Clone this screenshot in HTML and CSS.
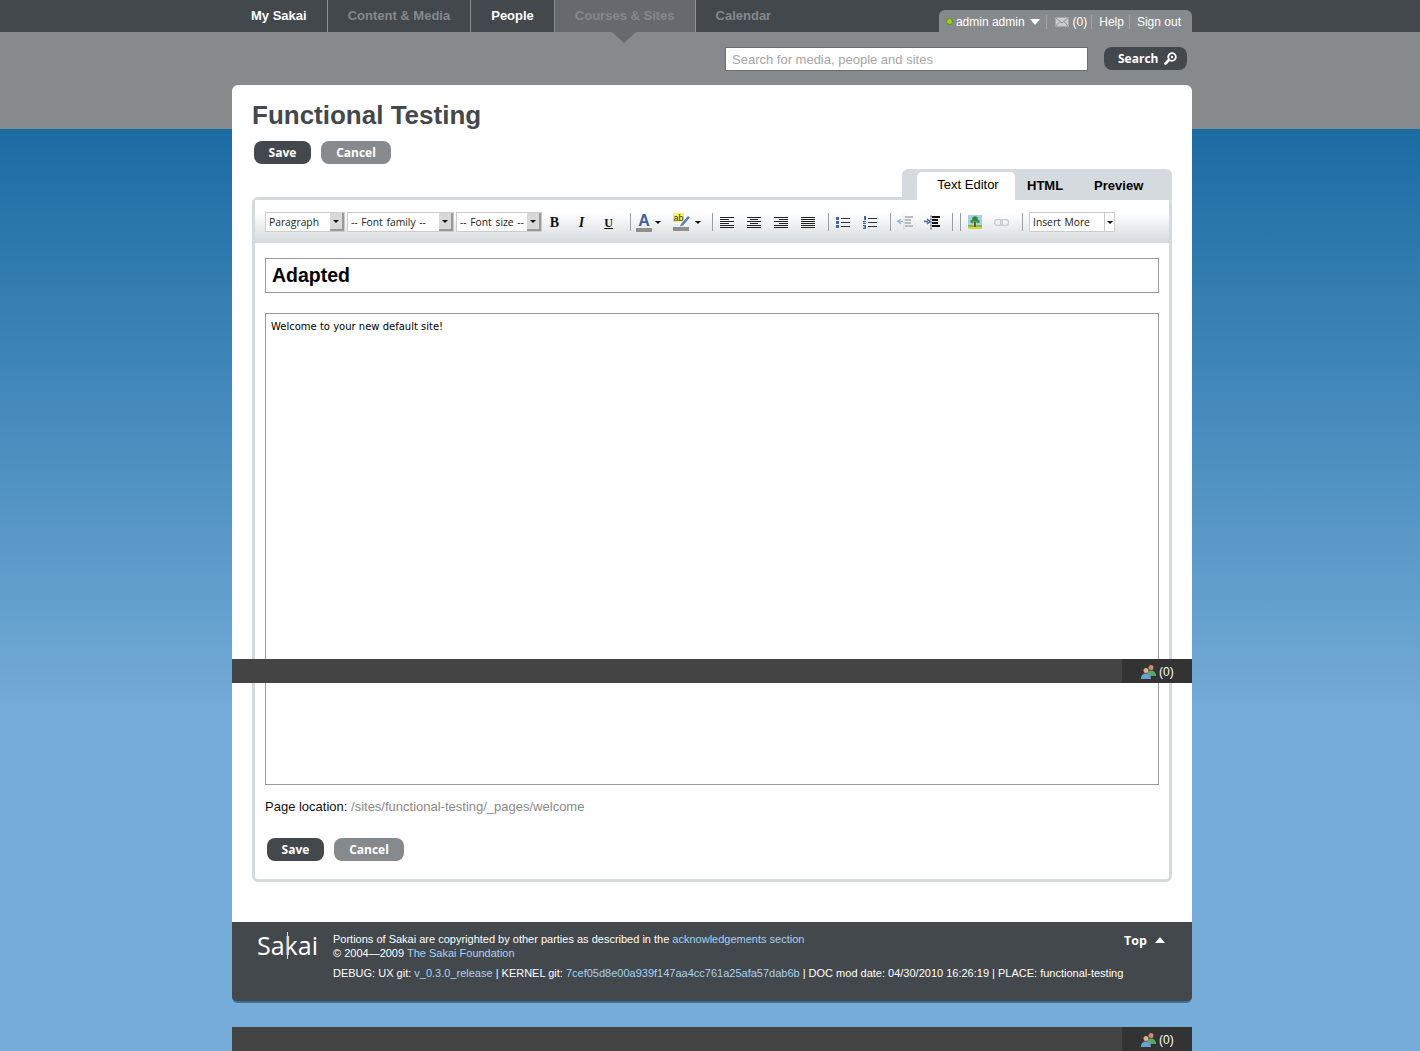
FILE: index.html
```html
<!DOCTYPE html>
<html lang="en">
<head>
    <meta charset="UTF-8">
    <meta name="viewport" content="width=device-width, initial-scale=1.0">
    <title>Functional Testing</title>
    <link rel="stylesheet" href="styles.css">
</head>
<body>
    <div class="page">
        <!-- Top navigation -->
        <div class="topnav">
            <a class="nav-item nav-on nav-first">My Sakai</a>
            <a class="nav-item">Content &amp; Media</a>
            <a class="nav-item nav-on">People</a>
            <a class="nav-item nav-current">Courses &amp; Sites</a>
            <a class="nav-item nav-last">Calendar</a>
            <div class="user-tab">
                <span class="user-name"><i class="status-dot"></i>admin admin<i class="user-arrow"></i></span>
                <span class="user-link user-msg">
                    <svg class="mail-icon" width="14" height="10" viewBox="0 0 14 10"><rect x="0.5" y="0.5" width="13" height="9" fill="#c9cbcd" stroke="#a5a8aa"/><path d="M1 1l6 5 6-5M1 9l4-4.500M13 9L9 4.500" fill="none" stroke="#8d9093"/></svg>
                    (0)
                </span>
                <span class="user-link">Help</span>
                <span class="user-link">Sign out</span>
            </div>
        </div>

        <div class="search-row">
            <input class="search-input" type="text" placeholder="Search for media, people and sites">
            <button class="btn btn-search">Search
                <svg width="13" height="13" viewBox="0 0 13 13"><circle cx="8" cy="5" r="3.800" fill="none" stroke="#fff" stroke-width="1.800"/><path d="M5 8L1.500 11.500" stroke="#fff" stroke-width="2.600" stroke-linecap="round"/><circle cx="8" cy="5" r="1.200" fill="#fff"/></svg>
            </button>
        </div>

        <div class="card">
            <h1 class="title">Functional Testing</h1>
            <div class="actions actions-top">
                <button class="btn btn-dark">Save</button>
                <button class="btn btn-grey">Cancel</button>
            </div>

            <div class="tabs">
                <a class="tab tab-on">Text Editor</a>
                <a class="tab tab-html">HTML</a>
                <a class="tab tab-preview">Preview</a>
            </div>

            <div class="editor">
                <div class="toolbar">
                    <div class="tb-select sel-para">Paragraph<i class="sel-btn"></i></div>
                    <div class="tb-select sel-family">-- Font family --<i class="sel-btn"></i></div>
                    <div class="tb-select sel-size">-- Font size --<i class="sel-btn"></i></div>

                    <span class="tb-btn tb-text tb-b">B</span>
                    <span class="tb-btn tb-text tb-i">I</span>
                    <span class="tb-btn tb-text tb-u">U</span>
                    <i class="tb-sep tb-sep-first"></i>

                    <span class="tb-drop"><span class="tb-color">A</span><i class="drop-arrow"></i></span>
                    <span class="tb-drop">
                        <svg width="19" height="18" viewBox="0 0 19 18"><rect x="0" y="0" width="11" height="9" fill="#f5ef6a"/><text x="0.500" y="8" font-family="Liberation Sans" font-size="9" fill="#333">ab</text><path d="M8 11l7-8 2 1.500-7 8-3 1z" fill="#5b7fb5"/><rect x="0" y="14" width="16" height="4" fill="#8f8f8f"/></svg>
                        <i class="drop-arrow"></i>
                    </span>
                    <i class="tb-sep"></i>

                    <span class="tb-btn"><svg width="14" height="11" viewBox="0 0 14 11"><path d="M0 .5h14M0 2.500h9M0 4.500h14M0 6.500h9M0 8.500h14M0 10.500h14" stroke="#222"/></svg></span>
                    <span class="tb-btn"><svg width="14" height="11" viewBox="0 0 14 11"><path d="M0 .5h14M3 2.500h8M0 4.500h14M3 6.500h8M0 8.500h14M0 10.500h14" stroke="#222"/></svg></span>
                    <span class="tb-btn"><svg width="14" height="11" viewBox="0 0 14 11"><path d="M0 .5h14M5 2.500h9M0 4.500h14M5 6.500h9M0 8.500h14M0 10.500h14" stroke="#222"/></svg></span>
                    <span class="tb-btn"><svg width="14" height="11" viewBox="0 0 14 11"><path d="M0 .5h14M0 2.500h14M0 4.500h14M0 6.500h14M0 8.500h14M0 10.500h14" stroke="#222"/></svg></span>
                    <i class="tb-sep"></i>

                    <span class="tb-btn"><svg width="14" height="13" viewBox="0 0 14 13"><path d="M5 2.500h9M5 6.500h9M5 10.500h9" stroke="#333"/><path d="M0 1h3v3H0zM0 5h3v3H0zM0 9h3v3H0z" fill="#3f67a8"/></svg></span>
                    <span class="tb-btn"><svg width="14" height="13" viewBox="0 0 14 13"><path d="M5 2.500h9M5 6.500h9M5 10.500h9" stroke="#333"/><path d="M1 0h2v4H1zM0 5h3v1H1.500v1H3v1H0V6.500h1.500V6H0zM0 9h3v4H0v-1h1.500v-.5H.5v-1h1V10H0z" fill="#3f67a8"/></svg></span>
                    <i class="tb-sep"></i>

                    <span class="tb-btn tb-off"><svg width="16" height="15" viewBox="0 0 16 15"><path d="M7 .5v14" stroke="#c9ccd0" stroke-dasharray="2 1"/><path d="M8 2h8M8 5h6M8 8h6M8 11h8" stroke="#b8bcc0" stroke-width="2"/><path d="M6 6.500H2M4 4L1 6.500 4 9" fill="none" stroke="#9db8da" stroke-width="1.500"/></svg></span>
                    <span class="tb-btn"><svg width="16" height="15" viewBox="0 0 16 15"><path d="M7 .5v14" stroke="#333" stroke-dasharray="2 1"/><path d="M8 2h8M8 5h6M8 8h6M8 11h8" stroke="#111" stroke-width="2"/><path d="M0 6.500h4M3 4l3 2.500L3 9" fill="none" stroke="#3f67a8" stroke-width="1.500"/></svg></span>
                    <i class="tb-sep"></i>
                    <i class="tb-sep"></i>

                    <span class="tb-btn"><svg width="14" height="14" viewBox="0 0 14 14"><rect width="14" height="14" fill="#a9cfee"/><rect y="10" width="14" height="2" fill="#7fbf3f"/><rect y="12" width="14" height="2" fill="#d8d23c"/><rect x="6" y="7" width="2" height="5" fill="#7a5228"/><circle cx="7" cy="4" r="2.800" fill="#2f8a2a"/><circle cx="4" cy="6.500" r="1.800" fill="#3d9c33"/><circle cx="10" cy="6.500" r="1.800" fill="#3d9c33"/></svg></span>
                    <span class="tb-btn tb-off"><svg width="15" height="7" viewBox="0 0 15 7"><rect x="0.500" y="0.500" width="8" height="6" rx="3" fill="none" stroke="#c4ccd6" stroke-width="1.400"/><rect x="6.500" y="0.500" width="8" height="6" rx="3" fill="none" stroke="#c4ccd6" stroke-width="1.400"/></svg></span>
                    <i class="tb-sep"></i>

                    <div class="tb-select sel-more">Insert More<i class="more-btn"></i></div>
                </div>

                <div class="editor-body">
                    <div class="page-title">Adapted</div>
                    <div class="page-frame">Welcome to your new default site!</div>
                    <p class="location">Page location: <span class="location-path">/sites/functional-testing/_pages/welcome</span></p>
                    <div class="actions">
                        <button class="btn btn-dark">Save</button>
                        <button class="btn btn-grey">Cancel</button>
                    </div>
                </div>
            </div>
        </div>

        <div class="footer">
            <div class="logo">Sakai<i class="logo-stem"></i></div>
            <div class="footer-text">
                <p>Portions of Sakai are copyrighted by other parties as described in the <a>acknowledgements section</a></p>
                <p>&copy; 2004&mdash;2009 <a>The Sakai Foundation</a></p>
                <p class="debug">DEBUG: UX git: <a>v_0.3.0_release</a> | KERNEL git: <a>7cef05d8e00a939f147aa4cc761a25afa57dab6b</a> | DOC mod date: 04/30/2010 16:26:19 | PLACE: functional-testing</p>
            </div>
            <a class="top-link">Top<i class="top-arrow"></i></a>
        </div>

        <!-- Chat bar, caught twice in the capture -->
        <div class="chatbar chatbar-mid">
            <span class="chat-count">
                <svg width="15" height="15" viewBox="0 0 15 15"><circle cx="10" cy="3.500" r="2.500" fill="#c98d6b"/><path d="M6 12c0-4 1.500-5.500 4-5.500S15 8 15 12z" fill="#5aa66f"/><circle cx="5" cy="6.500" r="2.500" fill="#e0b08f"/><path d="M0 15c0-4 2-5.500 5-5.500S10 11 10 15z" fill="#6d9fd1"/></svg>
                (0)
            </span>
        </div>
        <div class="chatbar chatbar-end">
            <span class="chat-count">
                <svg width="15" height="15" viewBox="0 0 15 15"><circle cx="10" cy="3.500" r="2.500" fill="#c98d6b"/><path d="M6 12c0-4 1.500-5.500 4-5.500S15 8 15 12z" fill="#5aa66f"/><circle cx="5" cy="6.500" r="2.500" fill="#e0b08f"/><path d="M0 15c0-4 2-5.500 5-5.500S10 11 10 15z" fill="#6d9fd1"/></svg>
                (0)
            </span>
        </div>
    </div>
</body>
</html>
```

FILE: styles.css
```css
* {
    box-sizing: border-box;
}

html, body {
    margin: 0;
    height: 1051px;
    overflow: hidden;
}

body {
    padding-left: 4px;
    font-family: "Liberation Sans", Arial, sans-serif;
    background: linear-gradient(to bottom, #43484d 0, #43484d 32px, #878a8d 32px, #878a8d 129px, #1b6ca2 129px, #75acd8 720px);
}

.page {
    width: 960px;
    height: 1051px;
    margin: 0 auto;
    position: relative;
}

/* Top navigation */
.topnav {
    display: flex;
    height: 32px;
}

.nav-item {
    padding: 0 20px;
    border-right: 1px solid #8f9295;
    font-size: 13px;
    font-weight: bold;
    line-height: 31px;
    color: #85888b;
}

.nav-first {
    padding-left: 19px;
}

.nav-on {
    color: #fff;
}

.nav-current {
    position: relative;
    background-color: #666a6f;
    color: #85888b;
}

.nav-current::after {
    content: "";
    position: absolute;
    left: 57px;
    top: 32px;
    border-style: solid;
    border-width: 11px 12px 0;
    border-color: #666a6f transparent transparent;
}

.nav-last {
    border-right: 0;
}

.user-tab {
    display: flex;
    align-items: center;
    height: 22px;
    margin-top: 10px;
    margin-left: auto;
    padding: 1px 6px 0 7px;
    background-color: #878a8d;
    border-radius: 6px 6px 0 0;
    font-size: 12px;
    color: #fff;
}

.status-dot {
    display: inline-block;
    width: 7px;
    height: 7px;
    margin-right: 3px;
    border-radius: 50%;
    background-color: #9ccf2e;
    border: 1px solid #5d8f12;
}

.user-name {
    display: flex;
    align-items: center;
}

.user-arrow {
    width: 0;
    margin-left: 5px;
    margin-right: 6px;
    border-style: solid;
    border-width: 6px 5px 0;
    border-color: #fff transparent transparent;
}

.user-link {
    padding: 0 5px 0 7px;
    border-left: 1px solid #a3a5a8;
    line-height: 14px;
}

.user-msg {
    display: flex;
    align-items: center;
    gap: 4px;
    padding-left: 8px;
    padding-right: 4px;
}

.search-row {
    display: flex;
    justify-content: flex-end;
    height: 53px;
    padding: 15px 5px 0 0;
}

.search-input {
    width: 363px;
    height: 24px;
    margin-right: 16px;
    padding: 0 6px;
    border: 1px solid #6a6d70;
    background-color: #fff;
    font-family: "Liberation Sans", Arial, sans-serif;
    font-size: 13px;
}

.search-input::placeholder {
    color: #a5a5a5;
    opacity: 1;
}

/* Buttons */
.btn {
    height: 23px;
    padding: 0 14px;
    border: 0;
    border-radius: 8px;
    font-family: "Open Sans", sans-serif;
    font-size: 12px;
    font-weight: bold;
    color: #fff;
}

.btn-dark {
    width: 57px;
    background-color: #43484d;
}

.btn-grey {
    width: 70px;
    background-color: #878a8d;
}

.btn-search {
    display: flex;
    align-items: center;
    gap: 6px;
    width: 83px;
    padding-right: 0;
    background-color: #43484d;
}

.btn-search svg {
    flex: none;
}

/* Main card */
.card {
    height: 837px;
    padding: 0 20px;
    background-color: #fff;
    border-radius: 6px 6px 0 0;
}

.title {
    margin: 0;
    padding-top: 14px;
    font-size: 26px;
    font-weight: bold;
    line-height: 33px;
    color: #43484d;
}

.actions {
    display: flex;
    gap: 10px;
    padding-left: 2px;
}

.actions-top {
    margin-top: 9px;
}

.tabs {
    display: flex;
    position: relative;
    width: 270px;
    height: 31px;
    margin: 5px 0 -3px auto;
    padding-top: 3px;
    padding-left: 15px;
    background-color: #d5dade;
    border-radius: 6px 6px 0 0;
    font-size: 13px;
    line-height: 26px;
    color: #000;
}

.tab {
    font-weight: bold;
}

.tab-on {
    width: 98px;
    background-color: #fff;
    border-radius: 5px 5px 0 0;
    font-weight: normal;
    text-align: center;
    padding-left: 4px;
    line-height: 25px;
}

.tab-html {
    margin-left: 12px;
    line-height: 27px;
}

.tab-preview {
    margin-left: 31px;
    line-height: 27px;
}

/* Editor */
.editor {
    height: 685px;
    border: 3px solid #d5dade;
    border-radius: 6px;
}

.toolbar {
    display: flex;
    align-items: center;
    height: 43px;
    padding: 1px 0 0 10px;
    background: linear-gradient(to bottom, #fff 0, #fff 30%, #d5dade 100%);
    font-family: "Open Sans", sans-serif;
    font-size: 10.300px;
    word-spacing: 1px;
    color: #222;
}

.tb-select {
    position: relative;
    height: 20px;
    margin-right: 2px;
    padding-left: 3px;
    background-color: #fff;
    border: 1px solid #ccc;
    line-height: 19px;
    white-space: nowrap;
}

.sel-para { width: 80px; }
.sel-family { width: 107px; }
.sel-size { width: 86px; margin-right: -1px; }
.sel-more { width: 86px; margin-left: 6px; margin-right: 0; }

.sel-btn,
.more-btn {
    position: absolute;
    right: 0;
    top: 0;
    bottom: 0;
    width: 14px;
    background-color: #d8d8d8;
    border-right: 2px solid #999;
    border-bottom: 2px solid #999;
}

.more-btn {
    width: 10px;
    background-color: #fff;
    border: 0;
    border-left: 1px solid #ccc;
}

.sel-btn::after,
.more-btn::after,
.drop-arrow {
    content: "";
    border-style: solid;
    border-width: 3px 3px 0;
    border-color: #111 transparent transparent;
}

.sel-btn::after,
.more-btn::after {
    position: absolute;
    left: 3px;
    top: 7px;
}

.more-btn::after {
    left: 2px;
    top: 8px;
}

.tb-btn {
    display: flex;
    align-items: center;
    justify-content: center;
    width: 27px;
    height: 20px;
    font-family: "Liberation Serif", serif;
    font-size: 14px;
    font-weight: bold;
    color: #111;
}

.tb-text {
    padding-top: 2px;
}

.tb-i { font-style: italic; }
.tb-u { text-decoration: underline; font-size: 12px; }

.tb-sep {
    width: 1px;
    height: 18px;
    margin-left: 7px;
    background-color: #9a9fa3;
}

.tb-sep-first {
    margin-left: 8px;
}

.tb-drop {
    display: flex;
    align-items: center;
    gap: 3px;
    width: 37px;
    height: 20px;
    padding-left: 5px;
}

.tb-color {
    width: 16px;
    border-bottom: 4px solid #8f8f8f;
    font-family: "Liberation Sans", sans-serif;
    font-size: 16px;
    font-weight: bold;
    line-height: 15px;
    text-align: center;
    color: #3f5f9f;
}

.drop-arrow {
    width: 0;
}

.editor-body {
    padding: 15px 10px 0;
}

.page-title {
    height: 35px;
    padding-left: 6px;
    border: 1px solid #999;
    font-size: 19.500px;
    font-weight: bold;
    line-height: 32px;
    color: #000;
}

.page-frame {
    height: 472px;
    margin-top: 20px;
    padding: 6px 5px;
    border: 1px solid #999;
    font-family: "DejaVu Sans", sans-serif;
    font-size: 10px;
    line-height: 13px;
    color: #000;
}

.location {
    margin: 14px 0 0;
    font-size: 13px;
    line-height: 16px;
    color: #111;
}

.location-path {
    color: #8a8a8a;
}

.editor-body .actions {
    margin-top: 23px;
}

/* Footer */
.footer {
    display: flex;
    height: 81px;
    background-color: #43484d;
    border-bottom: 2px solid #3e6f98;
    border-radius: 0 0 6px 6px;
    color: #fff;
}

.logo {
    position: relative;
    flex: none;
    width: 101px;
    padding: 5px 0 0 25px;
    font-family: "Open Sans", sans-serif;
    font-size: 25px;
    font-weight: 400;
    line-height: 36px;
}

.logo-stem {
    position: absolute;
    left: 55px;
    top: 10px;
    width: 1px;
    height: 27px;
    background-color: #ddd;
}

.footer-text {
    flex: none;
    padding-top: 10px;
    font-size: 11px;
    line-height: 14px;
    white-space: nowrap;
}

.footer-text p {
    margin: 0;
}

.footer-text a {
    color: #a9d2f2;
}

.footer-text .debug {
    margin-top: 6px;
}

.top-link {
    display: flex;
    align-items: center;
    gap: 8px;
    height: 14px;
    margin-top: 11px;
    margin-left: auto;
    padding-right: 27px;
    font-family: "Open Sans", sans-serif;
    font-size: 12.500px;
    font-weight: bold;
}

.top-arrow {
    width: 0;
    border-style: solid;
    border-width: 0 5px 6px;
    border-color: transparent transparent #fff;
}

/* Chat bar */
.chatbar {
    position: absolute;
    left: 0;
    right: 0;
    display: flex;
    justify-content: flex-end;
    height: 24px;
    background-color: #444;
}

.chatbar-mid { top: 659px; }
.chatbar-end { top: 1027px; }

.chat-count {
    display: flex;
    align-items: center;
    gap: 3px;
    width: 70px;
    padding-top: 1px;
    padding-left: 19px;
    background-color: #333;
    font-size: 12px;
    color: #fff;
}
```
